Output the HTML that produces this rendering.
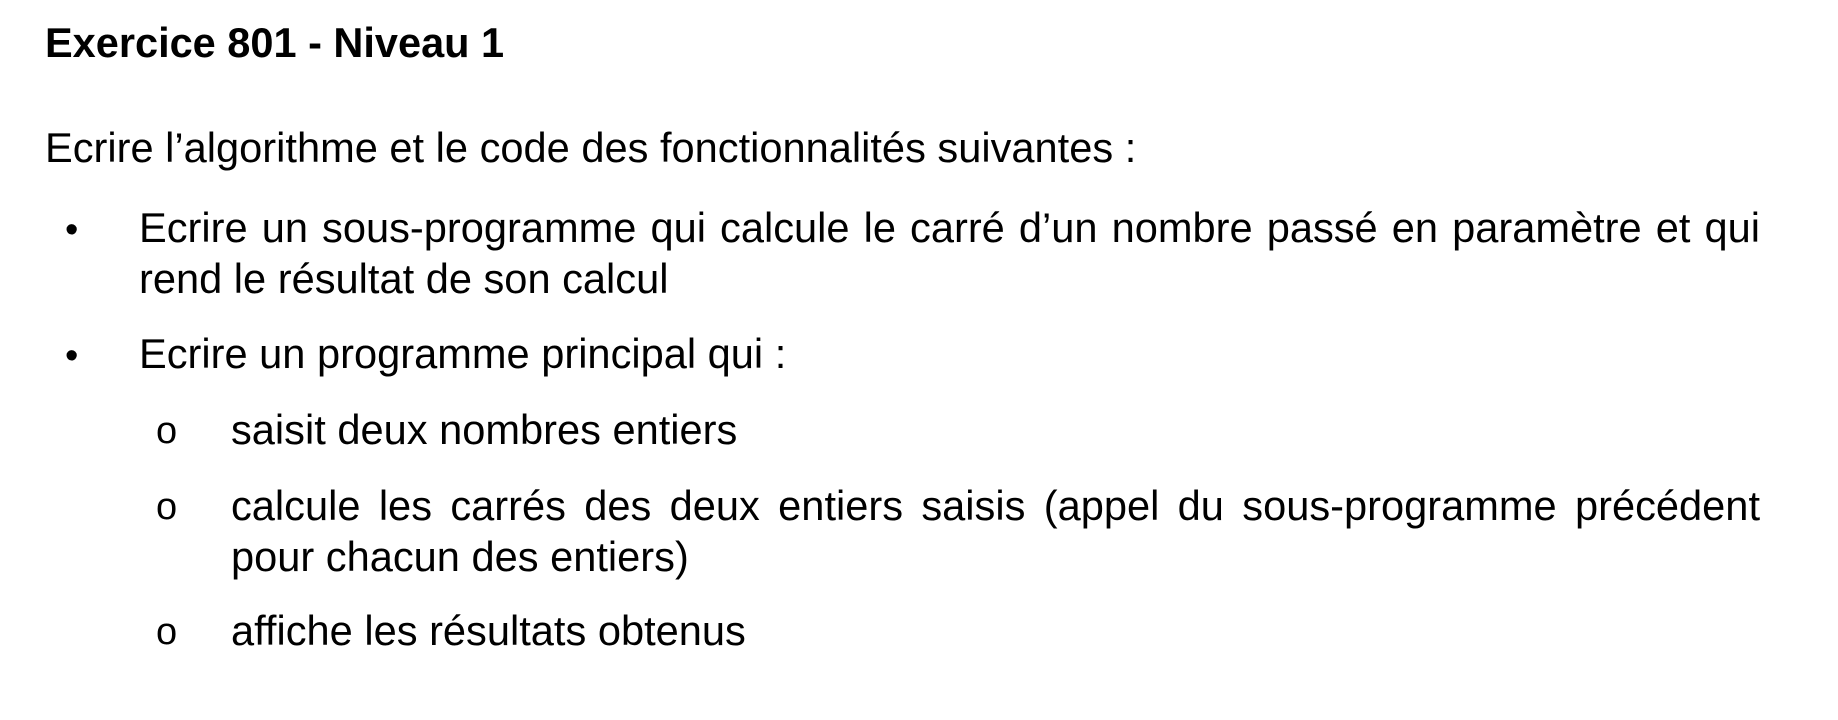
<!DOCTYPE html>
<html><head><meta charset="utf-8"><style>
html,body{margin:0;padding:0;background:#fff;width:1838px;height:720px;overflow:hidden}
body{font-family:"Liberation Sans",Arial,sans-serif;color:#000;position:relative}
.l{position:absolute;font-size:41.6px;line-height:41px;white-space:nowrap}
.j{text-align:justify;text-align-last:justify;white-space:normal}
.b{font-weight:bold;font-size:41.5px}
.d{font-size:38px}
.o{font-size:38px}
</style></head><body>
<div class="l b" style="left:45px;top:22px">Exercice 801 - Niveau 1</div>
<div class="l" style="left:45px;top:127px">Ecrire l’algorithme et le code des fonctionnalités suivantes :</div>
<div class="l d" style="left:65px;top:210px">•</div>
<div class="l j" style="left:139px;top:207px;width:1621px">Ecrire un sous-programme qui calcule le carré d’un nombre passé en paramètre et qui</div>
<div class="l" style="left:139px;top:258px">rend le résultat de son calcul</div>
<div class="l d" style="left:65px;top:336px">•</div>
<div class="l" style="left:139px;top:333px">Ecrire un programme principal qui :</div>
<div class="l o" style="left:156px;top:411px">o</div>
<div class="l" style="left:231px;top:409px">saisit deux nombres entiers</div>
<div class="l o" style="left:156px;top:487px">o</div>
<div class="l j" style="left:231px;top:485px;width:1529px">calcule les carrés des deux entiers saisis (appel du sous-programme précédent</div>
<div class="l" style="left:231px;top:536px">pour chacun des entiers)</div>
<div class="l o" style="left:156px;top:612px">o</div>
<div class="l" style="left:231px;top:610px">affiche les résultats obtenus</div>
</body></html>
